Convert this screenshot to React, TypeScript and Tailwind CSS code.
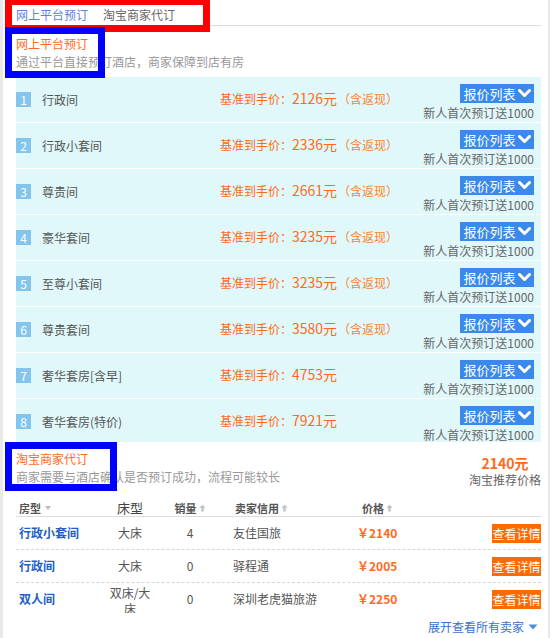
import React from "react";

const rooms = [
  { name: "行政间", price: "2126", cash: true },
  { name: "行政小套间", price: "2336", cash: true },
  { name: "尊贵间", price: "2661", cash: true },
  { name: "豪华套间", price: "3235", cash: true },
  { name: "至尊小套间", price: "3235", cash: true },
  { name: "尊贵套间", price: "3580", cash: true },
  { name: "奢华套房[含早]", price: "4753", cash: false },
  { name: "奢华套房(特价)", price: "7921", cash: false },
];

const sellers = [
  { room: "行政小套间", bed: "大床", sales: "4", seller: "友佳国旅", price: "2140" },
  { room: "行政间", bed: "大床", sales: "0", seller: "驿程通", price: "2005" },
  { room: "双人间", bed: "双床/大床", sales: "0", seller: "深圳老虎猫旅游", price: "2250" },
];

function Chevron() {
  return (
    <svg width="13" height="9" viewBox="0 0 13 9" className="ml-[2px]">
      <polyline points="1.5,1.5 6.5,6.5 11.5,1.5" fill="none" stroke="#fff" strokeWidth="3" strokeLinecap="round" strokeLinejoin="round" />
    </svg>
  );
}

function DownCaret() {
  return (
    <svg width="8" height="6" viewBox="0 0 8 6" className="ml-[3px]">
      <polygon points="1,1 7,1 4,5" fill="#bbb" />
    </svg>
  );
}

function UpArrow() {
  return (
    <svg width="7" height="8" viewBox="0 0 7 8" className="ml-[2px]">
      <polygon points="3.5,0.5 6.5,4 0.5,4" fill="#c4c4c4" />
      <rect x="2.2" y="4" width="2.6" height="3.5" fill="#c4c4c4" />
    </svg>
  );
}

export default function App() {
  return (
    <div
      className="relative w-[550px] h-[638px] bg-white border-l-[3px] border-r-[2px] border-[#e8e8e8] overflow-hidden"
      style={{ fontFamily: '"Noto Sans CJK SC", "Noto Sans", sans-serif' }}
    >
      <div className="ml-[13px] w-[525px]">
        {/* Tabs */}
        <div className="h-[26px] border-b border-[#dddddd] flex pt-[7px] text-[12px] leading-[16px]">
          <span className="text-[#5b82d6]">网上平台预订</span>
          <span className="ml-[15px] text-[#666]">淘宝商家代订</span>
        </div>

        {/* Section 1 header */}
        <div className="pt-[9px] pb-[6px] text-[12px] leading-[18px]">
          <div className="text-[#ff6a1a]">网上平台预订</div>
          <div className="text-[#999]">通过平台直接预订酒店，商家保障到店有房</div>
        </div>

        {/* Room list */}
        <div className="bg-[#e0f8fa]">
          {rooms.map((r, i) => (
            <div
              key={i}
              className={
                i < rooms.length - 1
                  ? "h-[46px] border-b border-white flex items-start"
                  : "h-[43px] flex items-start overflow-hidden"
              }
            >
              <div className="h-[45px] flex items-center">
                <div className="w-[15px] h-[15px] bg-[#84c5ee] text-white text-[12px] leading-[15px] text-center">
                  {i + 1}
                </div>
                <div className="ml-[11px] w-[178px] text-[12px] text-[#555]">{r.name}</div>
                <div className="flex items-baseline text-[#ff6a1a] -mt-[2px]">
                  <span className="text-[12px]">基准到手价：</span>
                  <span className="text-[14px]">{r.price}元</span>
                  {r.cash && <span className="text-[12px] text-[#f88532] ml-[1px]">（含返现）</span>}
                </div>
              </div>
              <div className="ml-auto pr-[7px] pt-[7px] flex flex-col items-end">
                <div className="h-[19px] w-[74px] bg-[#3b89ea] text-white text-[13px] leading-[19px] flex items-center justify-center">
                  <span>报价列表</span>
                  <Chevron />
                </div>
                <div className="mt-[2px] text-[12px] leading-[16px] text-[#666]">新人首次预订送1000</div>
              </div>
            </div>
          ))}
        </div>

        {/* Section 2 header */}
        <div className="flex">
          <div className="pt-[8px] text-[12px] leading-[18px]">
            <div className="text-[#ff6a1a]">淘宝商家代订</div>
            <div className="text-[#999]">商家需要与酒店确认是否预订成功，流程可能较长</div>
          </div>
          <div className="ml-auto pt-[12px] flex flex-col items-center">
            <div className="text-[14px] leading-[18px] font-bold text-[#ff6a1a]">2140元</div>
            <div className="text-[12px] leading-[16px] text-[#666]">淘宝推荐价格</div>
          </div>
        </div>

        {/* Table header */}
        <div className="h-[29px] pt-[12px] border-b border-[#dddddd] flex items-center text-[11px] text-[#555] font-bold">
          <div className="w-[92px] pl-[3px] flex items-center">
            <span>房型</span>
            <DownCaret />
          </div>
          <div className="w-[44px] text-center text-[13px] font-normal text-[#444]">床型</div>
          <div className="w-[76px] flex items-center justify-center">
            <span>销量</span>
            <UpArrow />
          </div>
          <div className="w-[124px] pl-[7px] flex items-center">
            <span>卖家信用</span>
            <UpArrow />
          </div>
          <div className="pl-[10px] flex items-center">
            <span>价格</span>
            <UpArrow />
          </div>
        </div>

        {/* Table rows */}
        {sellers.map((s, i) => (
          <div
            key={i}
            className={
              i < sellers.length - 1
                ? "h-[33px] border-b border-dashed border-[#d6d6d6] flex items-center text-[12px]"
                : "h-[32px] flex items-center text-[12px]"
            }
          >
            <div className="w-[92px] pl-[3px] font-bold text-[#1f5fc8]">{s.room}</div>
            <div className="w-[44px] text-center text-[#555]">
              {i === 2 ? (
                <div className="h-[28px] overflow-hidden leading-[16px] text-center">{s.bed}</div>
              ) : (
                s.bed
              )}
            </div>
            <div className="w-[76px] text-center text-[#555]">{s.sales}</div>
            <div className="w-[124px] pl-[5px] text-[#555]">{s.seller}</div>
            <div className="pl-[5px] font-bold text-[#ff6a1a]">￥{s.price}</div>
            <div className="ml-auto h-[19px] w-[49px] bg-[#ff6a00] text-white text-[12px] leading-[19px] text-center">
              查看详情
            </div>
          </div>
        ))}

        <div className="flex justify-end items-center pt-[4px] pr-[3px] text-[12px] leading-[16px] text-[#3a6fd0]">
          <span>展开查看所有卖家</span>
          <svg width="10" height="6" viewBox="0 0 10 6" className="ml-[4px]">
            <polygon points="0.5,0.5 9.5,0.5 5,5.5" fill="#4a8fd8" />
          </svg>
        </div>
      </div>

      {/* Annotation boxes */}
      <div className="absolute left-[2px] top-[-2px] w-[205px] h-[34px] border-[7px] border-[#ff0000]" />
      <div className="absolute left-[2px] top-[27px] w-[100px] h-[51px] border-[7px] border-[#0000ff]" />
      <div className="absolute left-[2px] top-[442px] w-[112px] h-[49px] border-[7px] border-[#0000ff]" />
    </div>
  );
}
